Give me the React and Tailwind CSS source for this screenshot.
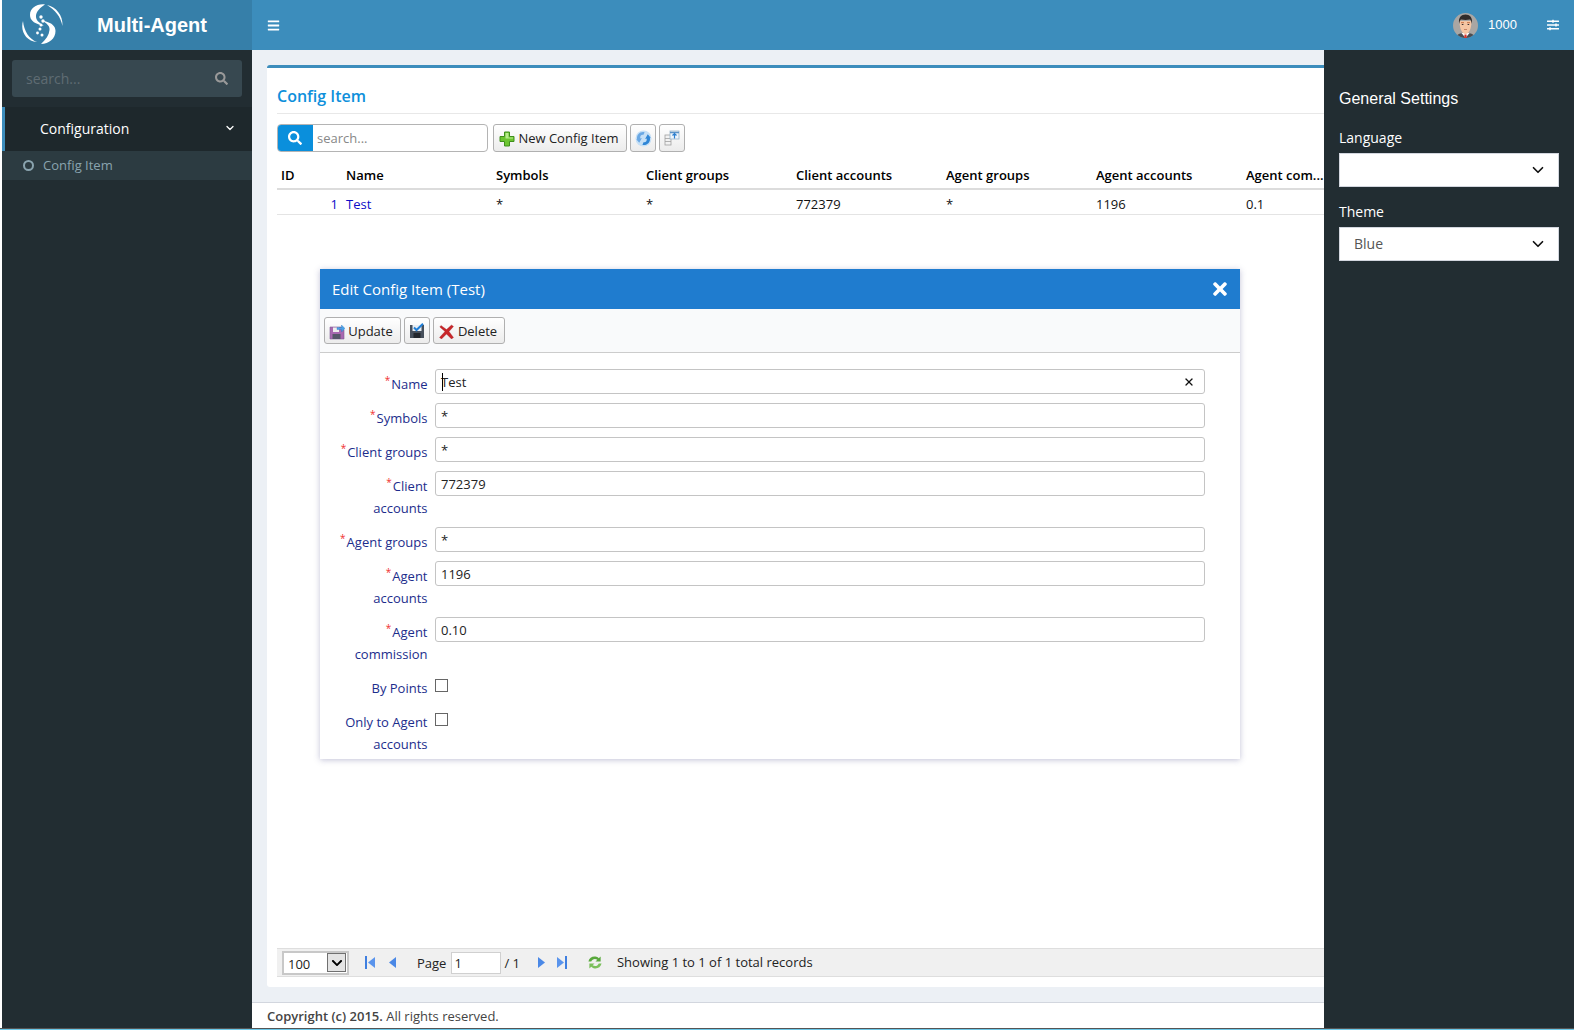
import React from "react";
import { FaBars, FaSearch, FaTimes, FaSlidersH, FaChevronDown } from "react-icons/fa";
import { ChevronDown, X } from "lucide-react";

const Logo = () => (
  <svg width="44" height="44" viewBox="11 3 44 44" className="shrink-0">
    <g fill="#fff">
      <path d="M35 4.500C27 3.500 20 8 20 15c0 5 4 8 9 9.500l5 1.500c-5-3.500-8.500-6-8-10.500C26.500 11 30 8 35 4.500Z" />
      <path d="M31 44c8 0 14.500-5.500 14.500-13 0-5-4-8-9.500-9.500l-4-1c5 3 8 5.500 7.500 9.500C39 35 36 39.500 31 44Z" />
      <path d="M13 21c-3 10 3 20 14 21-8-3-13-11-14-21Z" />
      <path d="M37 5c9 2 16 10 15.500 21C50.500 16 45 10 37 5Z" />
      <circle cx="31" cy="17" r="1.700" /><circle cx="33" cy="21" r="1.700" /><circle cx="31" cy="25" r="1.500" />
      <circle cx="30" cy="29" r="1.500" /><circle cx="27.500" cy="33" r="1.400" /><circle cx="32" cy="35" r="1.500" />
    </g>
  </svg>
);

const Avatar = () => (
  <svg width="25" height="25" viewBox="0 0 25 25" className="shrink-0">
    <defs><clipPath id="av"><circle cx="12.500" cy="12.500" r="12.500" /></clipPath></defs>
    <g clipPath="url(#av)">
      <rect width="25" height="25" fill="#a9a6a3" />
      <path d="M3 25c.5-4 4-5 9.500-5s9 1 9.500 5Z" fill="#4a4d52" />
      <path d="M8.500 20h8l-4 5Z" fill="#fff" />
      <path d="M11.500 21.500h2l.3 3.500h-2.600Z" fill="#d8342c" />
      <path d="M6.500 8c0 7.500 2.500 13 6 13s6-5.500 6-13Z" fill="#f5c6a4" />
      <path d="M6.300 11C4.800 4.500 8.500 1.500 12.500 1.500S20.200 4.500 18.700 11c-.3-2.500-.8-4-1.700-4.500-2.800.6-6.200.6-9 0-.9.500-1.400 2-1.700 4.500Z" fill="#302c2b" />
      <path d="M8 9.700h3M14 9.700h3" stroke="#c0673a" strokeWidth=".9" />
      <path d="M8.800 11.500h1.600M14.600 11.500h1.600" stroke="#3a3030" strokeWidth="1" />
      <path d="M11 16.500h3" stroke="#b5694a" strokeWidth=".7" />
    </g>
  </svg>
);

const PlusIcon = () => (
  <svg width="16" height="16" viewBox="0 0 16 16">
    <path d="M5.500 1h5v4.500H15v5h-4.500V15h-5v-4.500H1v-5h4.500Z" fill="#6cc531" stroke="#3f8f1c" />
    <path d="M6.500 2h3v4.500H14v1H6.500Z" fill="#b7ec8c" />
  </svg>
);
const RefreshIcon = () => (
  <svg width="17" height="17" viewBox="0 0 16 16">
    <circle cx="8" cy="8" r="7.500" fill="#c6e0f6" />
    <path d="M2 9C1 4.500 5 1 9 2l-1 2.500C6 4 4.500 5.500 5 8l1.500-.5L4 12 1 8.500Z" fill="#6aa8e4" />
    <path d="M14 7c1 4.500-3 8-7 7l1-2.500c2 .5 3.500-1 3-3.500l-1.500.5L12 4l3 3.500Z" fill="#2f86d6" />
  </svg>
);
const ExportIcon = () => (
  <svg width="16" height="16" viewBox="0 0 16 16" fill="none">
    <rect x="1" y="5" width="6" height="10" fill="#f2f2f2" stroke="#a0a0a0" strokeWidth=".8" />
    <path d="M1 8.500h6M1 11.500h6" stroke="#a0a0a0" strokeWidth=".8" />
    <rect x="6" y="1" width="9" height="8" fill="#eef5fb" stroke="#9ab4c9" strokeWidth=".8" />
    <path d="M6 2.500h9" stroke="#5c93c7" strokeWidth="1.500" />
    <path d="M10.500 3.500v5M8.500 5.500l2-2 2 2" stroke="#2a7fd0" strokeWidth="1.200" />
  </svg>
);
const UpdateIcon = () => (
  <svg width="16" height="16" viewBox="0 0 16 16">
    <path d="M1 3h11l3 3v9H1Z" fill="#a868b0" stroke="#7d5a94" strokeWidth=".6" />
    <rect x="4" y="3.500" width="6" height="4.500" fill="#eee" />
    <rect x="3.500" y="10" width="8" height="5" fill="#56566a" />
    <path d="M8 3.500h4.500V1l3.500 3.500L12.500 8V5.500H8Z" fill="#4aa0e6" stroke="#2a78c0" strokeWidth=".4" />
  </svg>
);
const SaveIcon = () => (
  <svg width="16" height="16" viewBox="0 0 16 16">
    <path d="M1 2h14v13H1Z" fill="#47505c" />
    <rect x="3.500" y="2" width="9" height="6" fill="#e8eef4" />
    <rect x="4.500" y="10" width="7" height="5" fill="#23272d" />
    <path d="M5 4.500l2.500 2.500L14 .8" fill="none" stroke="#1f7fd8" strokeWidth="2" />
  </svg>
);
const DeleteIcon = () => (
  <svg width="15" height="15" viewBox="0 0 15 15">
    <path d="M2 1.500l5.500 4 5-4.500 2 1.500-4.500 5 4.500 6-2 1.500-5-5-5 5-2-1.500L6 7.500 .8 3Z" fill="#c8262a" stroke="#9c1a1e" strokeWidth=".3" />
  </svg>
);
const GreenRefresh = () => (
  <svg width="16" height="15" viewBox="0 0 17 15">
    <path d="M1.500 6.500C2.500 2.500 6 .5 10 1.500c1 .3 2 .8 2.500 1.500L14.500 1v5.500H9l2-2c-2.500-1.500-5.500-.7-6.500 2Z" fill="#58a83c" />
    <path d="M15.500 8.500C14.500 12.500 11 14.500 7 13.500c-1-.3-2-.8-2.500-1.500l-2 2V8.500H8l-2 2c2.500 1.500 5.500.7 6.500-2Z" fill="#7bbf5c" />
  </svg>
);
const First = () => (
  <svg width="10" height="13" viewBox="0 0 10 13"><rect x="0" y="0" width="2" height="13" fill="#3f7fe0" /><path d="M10 1v11L3 6.500Z" fill="#5a94ec" /></svg>
);
const Prev = () => (
  <svg width="7" height="13" viewBox="0 0 7 13"><path d="M7 1v11L0 6.500Z" fill="#4a88e6" /></svg>
);
const Next = () => (
  <svg width="7" height="13" viewBox="0 0 7 13"><path d="M0 1v11l7-5.500Z" fill="#4a88e6" /></svg>
);
const Last = () => (
  <svg width="10" height="13" viewBox="0 0 10 13"><rect x="8" y="0" width="2" height="13" fill="#3f7fe0" /><path d="M0 1v11l7-5.500Z" fill="#5a94ec" /></svg>
);

const btn = "flex items-center justify-center rounded-[3px] border border-[#b0b0b0] bg-gradient-to-b from-white to-[#ececec] text-[13px] text-[#222]";

const Field = ({ label, value, required = true, check, clear, caret }) => {
  const lines = label.split("|");
  return (
    <div className="flex">
      <div className="w-[107.5px] shrink-0 pt-1 pb-2 text-right text-[13px] leading-[22px] text-[#1c2d8c]">
        {lines.map((l, i) => (
          <div key={l}>
            {required && i === 0 && <span className="relative -top-[5px] mr-[1px] text-[10px] leading-none text-[#f03030]">*</span>}
            {l}
          </div>
        ))}
      </div>
      <div className="ml-[7.5px]">
        {check ? (
          <div className="mt-[6px] h-[13px] w-[13px] border border-[#666] bg-white" />
        ) : (
          <div className="relative h-[25px] w-[770px] rounded-[3px] border border-[#c4c4c4] bg-white pl-[5px] text-[13px] leading-[24px] text-[#222]">
            {value}
            {caret && <span className="absolute left-[6px] top-[3px] h-[18px] w-px bg-black" />}
            {clear && <X size={12} strokeWidth={2.5} className="absolute right-[9px] top-[6px] text-[#111]" />}
          </div>
        )}
      </div>
    </div>
  );
};

const cols = [
  ["Symbols", "*"],
  ["Client groups", "*"],
  ["Client accounts", "772379"],
  ["Agent groups", "*"],
  ["Agent accounts", "1196"],
];

export default function App() {
  return (
    <div className="relative flex h-[1030px] w-[1574px] flex-col overflow-hidden bg-white font-['Open_Sans',sans-serif]">
      <div className="ml-[2px] flex min-h-0 flex-1 flex-col">
        <header className="flex h-[50px] shrink-0 items-center bg-[#3c8dbc] text-white">
          <div className="flex h-full w-[250px] shrink-0 items-center bg-[#367fa9] pl-[19px]">
            <Logo />
            <span className="ml-[32px] font-['Liberation_Sans',sans-serif] text-[20px] font-bold">Multi-Agent</span>
          </div>
          <FaBars className="ml-[15px] text-[13px]" />
          <div className="ml-auto flex items-center pr-[15px]">
            <Avatar />
            <span className="ml-[10px] font-['Liberation_Sans',sans-serif] text-[13px]">1000</span>
            <FaSlidersH className="ml-[30px] text-[12px]" />
          </div>
        </header>

        <div className="flex min-h-0 flex-1">
          <aside className="w-[250px] shrink-0 bg-[#222d32] pt-[10px]">
            <div className="mx-[10px] flex h-[37px] items-center justify-between rounded-[3px] bg-[#374850] pl-[14px] pr-[14px]">
              <span className="text-[14px] text-[#5f6c73]">search...</span>
              <FaSearch className="text-[13px] text-[#999]" />
            </div>
            <div className="mt-[10px] flex h-[44px] items-center justify-between border-l-[3px] border-[#3c8dbc] bg-[#1e282c] pb-[2px] pl-[35px] pr-[16px] text-[14px] text-white">
              <span>Configuration</span>
              <ChevronDown size={12} strokeWidth={2.5} />
            </div>
            <div className="flex h-[29px] items-center bg-[#2c3b41] pl-[21px] text-[13px] text-[#8aa4af]">
              <div className="h-[11px] w-[11px] rounded-full border-2 border-[#8aa4af]" />
              <span className="ml-[9px]">Config Item</span>
            </div>
          </aside>

          <main className="flex min-w-0 flex-1 flex-col bg-[#ecf0f5]">
            <div className="flex min-h-0 flex-1 flex-col pl-[15px] pt-[15px] pb-[15px]">
              <section className="flex min-h-0 flex-1 flex-col rounded-[3px] border-t-[3px] border-[#3c8dbc] bg-white pl-[10px]">
                <div className="flex h-[46px] shrink-0 items-end border-b border-[#e8e8e8] pb-[5px] text-[16px] font-semibold text-[#0d8fdb]">Config Item</div>
                <div className="mt-[10px] flex h-[28px] shrink-0 items-stretch">
                  <div className="flex w-[211px] overflow-hidden rounded-[4px] border border-[#b4b4b4]">
                    <div className="-my-px -ml-px flex w-[36px] items-center justify-center bg-[#0a8fdc] text-[14px] text-white"><FaSearch /></div>
                    <div className="flex flex-1 items-center pl-1 pt-[2px] text-[13px] text-[#888]">search...</div>
                  </div>
                  <div className={`${btn} ml-[5px] w-[134px] gap-[3px] pr-[2px] pt-[2px]`}><PlusIcon />New Config Item</div>
                  <div className={`${btn} ml-[3px] w-[26px]`}><RefreshIcon /></div>
                  <div className={`${btn} ml-[3px] w-[26px]`}><ExportIcon /></div>
                </div>
                <div className="mt-[10px] flex h-[28px] shrink-0 items-center border-b-[2px] border-[#dcdcdc] pt-[2px] text-[13px] font-semibold text-black">
                  <div className="w-[65px] pl-[4px]">ID</div>
                  <div className="w-[150px] pl-[4px]">Name</div>
                  {cols.map(([h]) => (
                    <div key={h} className="w-[150px] pl-[4px]">{h}</div>
                  ))}
                  <div className="w-[79px] whitespace-nowrap pl-[4px]">Agent com...</div>
                </div>
                <div className="flex h-[25px] shrink-0 items-center border-b border-[#e4e4e4] pt-[6px] text-[13px] text-[#111]">
                  <div className="w-[65px] pr-[4px] text-right text-[#0c0cc8]">1</div>
                  <div className="w-[150px] pl-[4px] text-[#0c0cc8]">Test</div>
                  {cols.map(([h, v]) => (
                    <div key={h} className="w-[150px] pl-[4px]">{v}</div>
                  ))}
                  <div className="w-[79px] pl-[4px]">0.1</div>
                </div>
                <div className="min-h-0 flex-1" />
                <div className="mb-[10px] flex h-[29px] shrink-0 items-center border-y border-[#dedede] bg-[#f0f0f0] text-[13px] text-[#222]">
                  <div className="ml-[5px] flex h-[24px] w-[67px] items-center justify-between border-2 border-[#c8c8c8] bg-white pl-[4px] pr-[1px]">
                    <span className="pt-[5px]">100</span>
                    <div className="flex h-[19px] w-[19px] items-center justify-center border border-[#707070] bg-[#e4e4e4] text-[12px] text-black"><FaChevronDown /></div>
                  </div>
                  <div className="ml-[16px]"><First /></div>
                  <div className="ml-[14px]"><Prev /></div>
                  <span className="ml-[21px] pt-[3px]">Page</span>
                  <div className="ml-[5px] mt-[1px] h-[22px] w-[50px] border border-[#d0d0d0] bg-white pl-[2px] leading-[20px]">1</div>
                  <span className="ml-[3px] pt-[2px]">/ 1</span>
                  <div className="ml-[18px]"><Next /></div>
                  <div className="ml-[12px]"><Last /></div>
                  <div className="ml-[20px]"><GreenRefresh /></div>
                  <span className="ml-[14px]">Showing 1 to 1 of 1 total records</span>
                </div>
              </section>
            </div>
            <footer className="flex h-[26px] shrink-0 items-center border-t border-[#d2d6de] bg-white pl-[15px] pt-[2px] text-[13px] text-[#444]">
              <b className="font-semibold">Copyright (c) 2015.</b>&nbsp;All rights reserved.
            </footer>
          </main>
        </div>
      </div>
      <div className="h-px shrink-0 bg-[#555]" />
      <div className="h-px shrink-0 bg-[#6cc8e8]" />

      {/* Right settings panel */}
      <div className="absolute bottom-[2px] right-0 top-[50px] w-[250px] bg-[#222d32] px-[15px] pt-[39px] text-[14px] text-white">
        <div className="font-['Liberation_Sans',sans-serif] text-[16px] leading-5">General Settings</div>
        <div className="mt-[19px] leading-5">Language</div>
        <div className="mt-[5px] flex h-[34px] items-center justify-end border border-[#d2d6de] bg-white pr-[11px] text-[#111]">
          <ChevronDown size={18} strokeWidth={2.25} />
        </div>
        <div className="mt-[15px] leading-5">Theme</div>
        <div className="mt-[5px] flex h-[34px] items-center justify-between border border-[#d2d6de] bg-white pl-[14px] pr-[11px] text-[#555]">
          <span className="pb-[2px]">Blue</span>
          <ChevronDown size={18} strokeWidth={2.25} className="text-[#111]" />
        </div>
      </div>

      {/* Modal */}
      <div className="absolute left-[320px] top-[269px] h-[490px] w-[920px] bg-white shadow-[0_1px_6px_rgba(80,80,140,0.35)]">
        <div className="flex h-[40px] items-center justify-between bg-[#1f7ccf] pl-[12px] pr-[10px] text-[15px] text-white">
          <span>Edit Config Item (Test)</span>
          <FaTimes className="text-[20px]" />
        </div>
        <div className="flex h-[44px] items-start border-b border-[#ccc] bg-[#f9fafb] pl-[4px] pt-[8px]">
          <div className={`${btn} h-[27px] w-[77px] gap-[3px] pr-[3px] pt-[2px]`}><UpdateIcon />Update</div>
          <div className={`${btn} ml-[3px] h-[27px] w-[26px]`}><SaveIcon /></div>
          <div className={`${btn} ml-[3px] h-[27px] w-[72px] gap-[4px] pr-[2px] pt-[2px]`}><DeleteIcon />Delete</div>
        </div>
        <div className="pt-[16px]">
          <Field label="Name" value="Test" clear caret />
          <Field label="Symbols" value="*" />
          <Field label="Client groups" value="*" />
          <Field label="Client|accounts" value="772379" />
          <Field label="Agent groups" value="*" />
          <Field label="Agent|accounts" value="1196" />
          <Field label="Agent|commission" value="0.10" />
          <Field label="By Points" check required={false} />
          <Field label="Only to Agent|accounts" check required={false} />
        </div>
      </div>
    </div>
  );
}
